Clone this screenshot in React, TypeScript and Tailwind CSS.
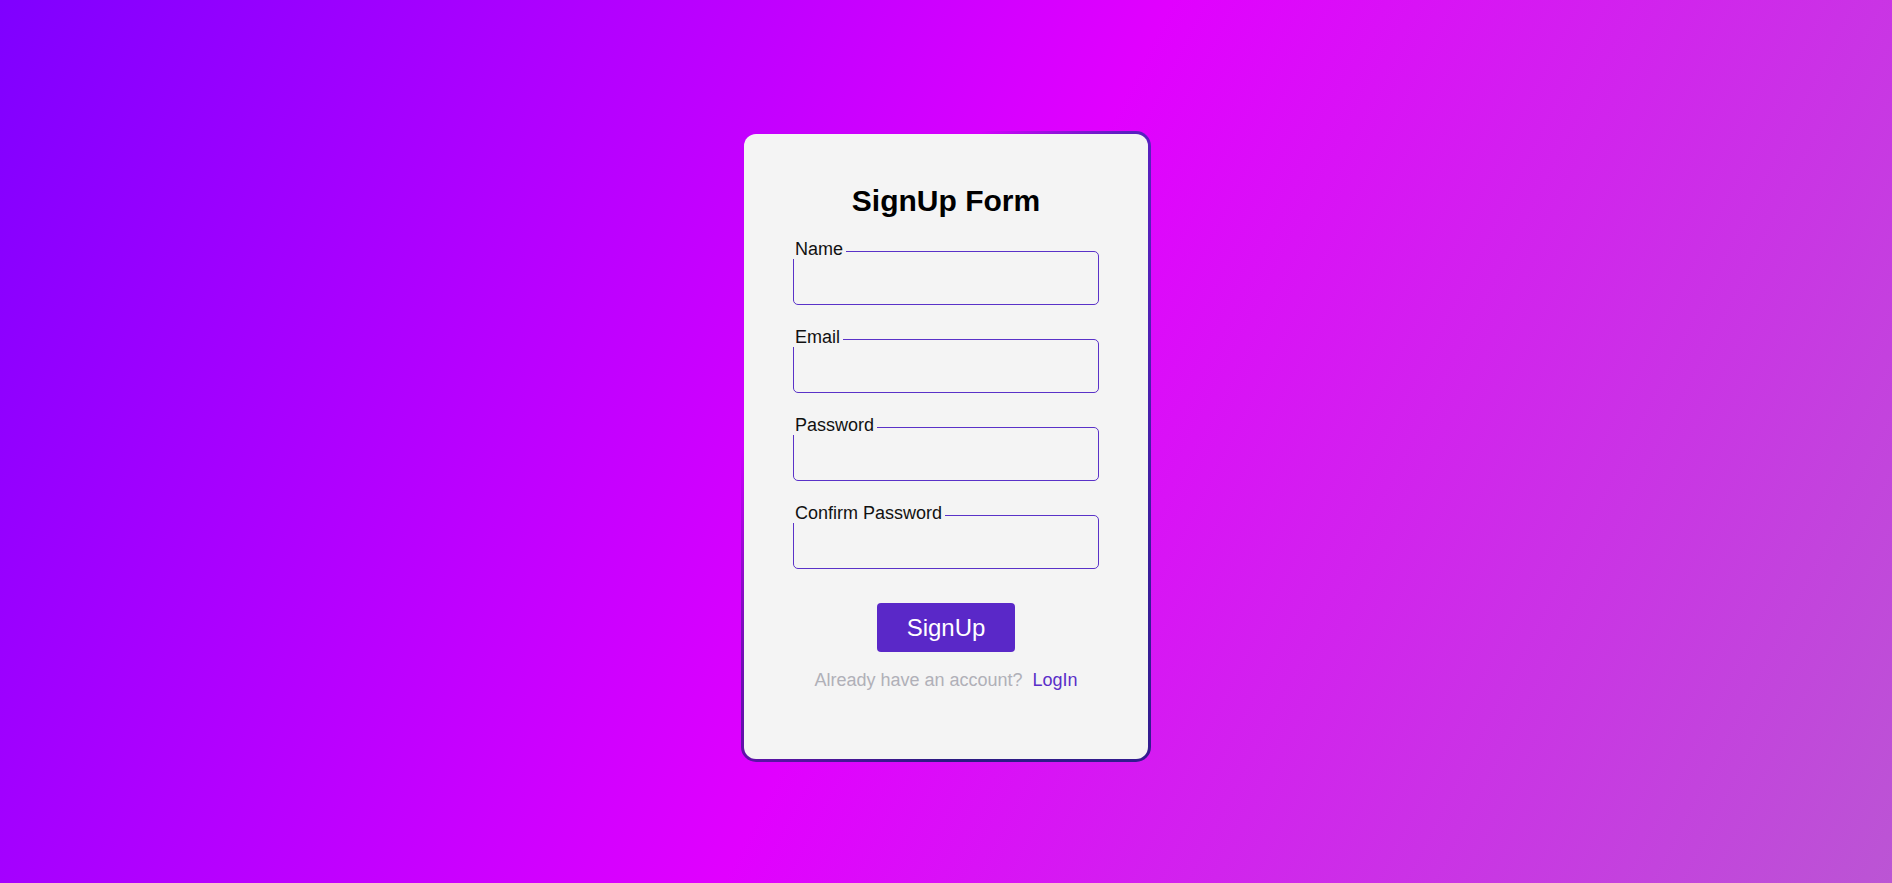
import { useState } from 'react'

const FIELDS = [
  { id: 'name', label: 'Name', type: 'text' },
  { id: 'email', label: 'Email', type: 'email' },
  { id: 'password', label: 'Password', type: 'password' },
  { id: 'confirm', label: 'Confirm Password', type: 'password' },
]

function Field({ id, label, type }: { id: string; label: string; type: string }) {
  const [value, setValue] = useState('')
  return (
    <div className="relative">
      <input
        id={id}
        type={type}
        value={value}
        onChange={(event) => setValue(event.currentTarget.value)}
        className="block h-[54px] w-full rounded-[5px] border border-[#5a32c8] bg-transparent px-3 text-[18px] text-black outline-none"
      />
      <label
        htmlFor={id}
        className="absolute left-[-1px] top-[-12px] bg-[#f4f4f4] pl-[3px] pr-[3px] text-[18px] leading-[20px] text-[#111]"
      >
        {label}
      </label>
    </div>
  )
}

export default function App() {
  return (
    <div
      className="flex min-h-[883px] w-full justify-center bg-[linear-gradient(117deg,#7f00ff_0%,#e100ff_50%,#bb55d4_100%)] pt-[131px]"
      style={{ fontFamily: '"Liberation Sans", Arial, sans-serif' }}
    >
      <div className="h-[631px] w-[410px] rounded-[15px] bg-[conic-gradient(from_0deg,transparent_0deg,transparent_6deg,#5a20c0_30deg,#3a1c9c_120deg,#2a1a80_180deg,#6a10b0_220deg,transparent_270deg,transparent_360deg)] p-[3px]">
        <div className="flex h-full flex-col rounded-[12px] bg-[#f4f4f4] px-[49px] pt-[50px]">
          <h2 className="text-center text-[30px] font-bold leading-[normal] text-black">SignUp Form</h2>

          <form className="mt-[33px] flex flex-col gap-[34px]" onSubmit={(event) => event.preventDefault()}>
            {FIELDS.map((field) => (
              <Field key={field.id} {...field} />
            ))}

            <div className="flex flex-col items-center">
              <button
                type="submit"
                className="h-[49px] w-[138px] rounded-[4px] bg-[#5a28c8] text-[24px] leading-[normal] text-white"
              >
                SignUp
              </button>
              <p className="mt-[18px] text-[18px] leading-[normal] text-[#b0b0b8]">
                Already have an account?{' '}
                <a href="#" className="ml-[5px] text-[#5a2ec8]">
                  LogIn
                </a>
              </p>
            </div>
          </form>
        </div>
      </div>
    </div>
  )
}
